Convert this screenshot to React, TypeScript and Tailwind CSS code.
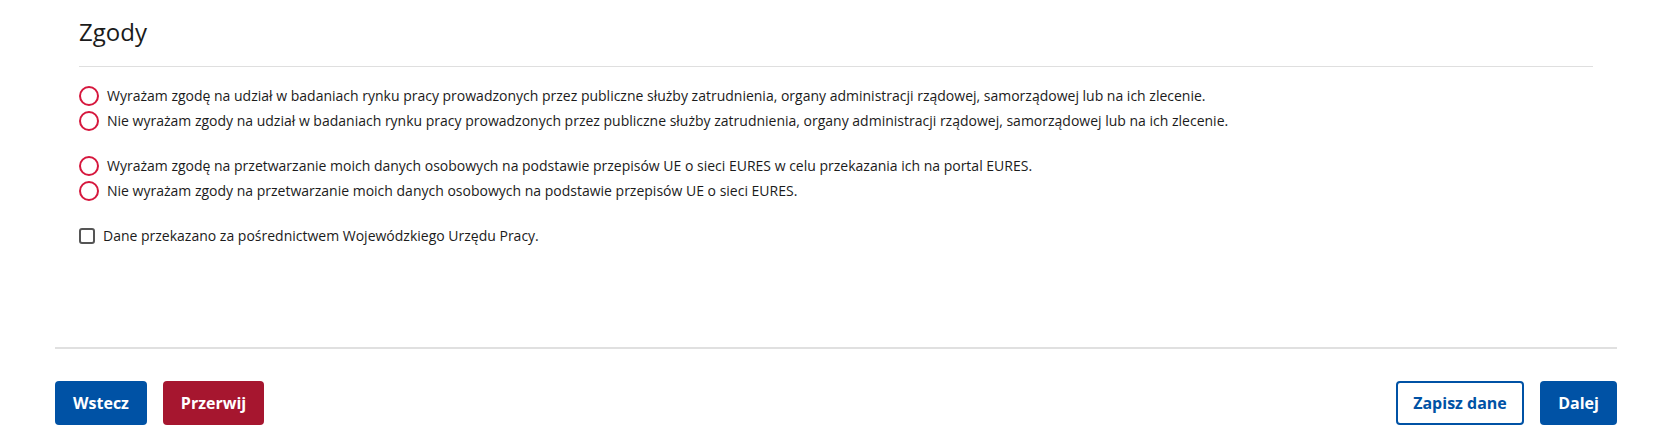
import React, { useState } from "react";

const groups = [
  [
    "Wyrażam zgodę na udział w badaniach rynku pracy prowadzonych przez publiczne służby zatrudnienia, organy administracji rządowej, samorządowej lub na ich zlecenie.",
    "Nie wyrażam zgody na udział w badaniach rynku pracy prowadzonych przez publiczne służby zatrudnienia, organy administracji rządowej, samorządowej lub na ich zlecenie.",
  ],
  [
    "Wyrażam zgodę na przetwarzanie moich danych osobowych na podstawie przepisów UE o sieci EURES w celu przekazania ich na portal EURES.",
    "Nie wyrażam zgody na przetwarzanie moich danych osobowych na podstawie przepisów UE o sieci EURES.",
  ],
];

const App = () => {
  const [choices, setChoices] = useState<(number | null)[]>([null, null]);
  const [viaWup, setViaWup] = useState(false);

  return (
    <div className="w-full bg-white px-[55px] pr-[45px] font-['Open_Sans',sans-serif] text-[#1b1b1b]">
      <div className="px-6 pt-[14px] pb-[99px] border-b-2 border-[#e0e0e0]">
        <h2 className="text-[24px] leading-[36px] font-normal">Zgody</h2>
        <div className="mt-4 border-t border-[#dfdfdf]" />

        <div className="mt-4 flex flex-col gap-5">
          {groups.map((group, gi) => (
            <div key={gi} className="flex flex-col">
              {group.map((label, li) => (
                <label
                  key={li}
                  className="flex h-[25px] items-center gap-2 cursor-pointer text-[14px]"
                  onClick={() =>
                    setChoices(choices.map((c, i) => (i === gi ? li : c)))
                  }
                >
                  <span className="flex h-5 w-5 shrink-0 items-center justify-center rounded-full border-2 border-[#d6173d]">
                    {choices[gi] === li && (
                      <span className="h-2.5 w-2.5 rounded-full bg-[#d6173d]" />
                    )}
                  </span>
                  <span>{label}</span>
                </label>
              ))}
            </div>
          ))}

          <label
            className="flex h-[25px] items-center gap-2 cursor-pointer text-[14px]"
            onClick={() => setViaWup(!viaWup)}
          >
            <span className="flex h-4 w-4 shrink-0 items-center justify-center rounded-[3px] border-2 border-[#555]">
              {viaWup && <span className="h-2 w-2 bg-[#555]" />}
            </span>
            <span>Dane przekazano za pośrednictwem Wojewódzkiego Urzędu Pracy.</span>
          </label>
        </div>
      </div>

      <div className="flex items-center justify-between pt-[32px] pb-[15px]">
        <div className="flex gap-4">
          <button className="h-11 w-[92px] rounded bg-[#0052a5] text-base font-bold text-white">
            Wstecz
          </button>
          <button className="h-11 w-[101px] rounded bg-[#a6162f] text-base font-bold text-white">
            Przerwij
          </button>
        </div>
        <div className="flex gap-4">
          <button className="h-11 w-[128px] rounded border-2 border-[#0052a5] bg-white text-base font-bold text-[#0052a5]">
            Zapisz dane
          </button>
          <button className="h-11 w-[77px] rounded bg-[#0052a5] text-base font-bold text-white">
            Dalej
          </button>
        </div>
      </div>
    </div>
  );
};

export default App;
